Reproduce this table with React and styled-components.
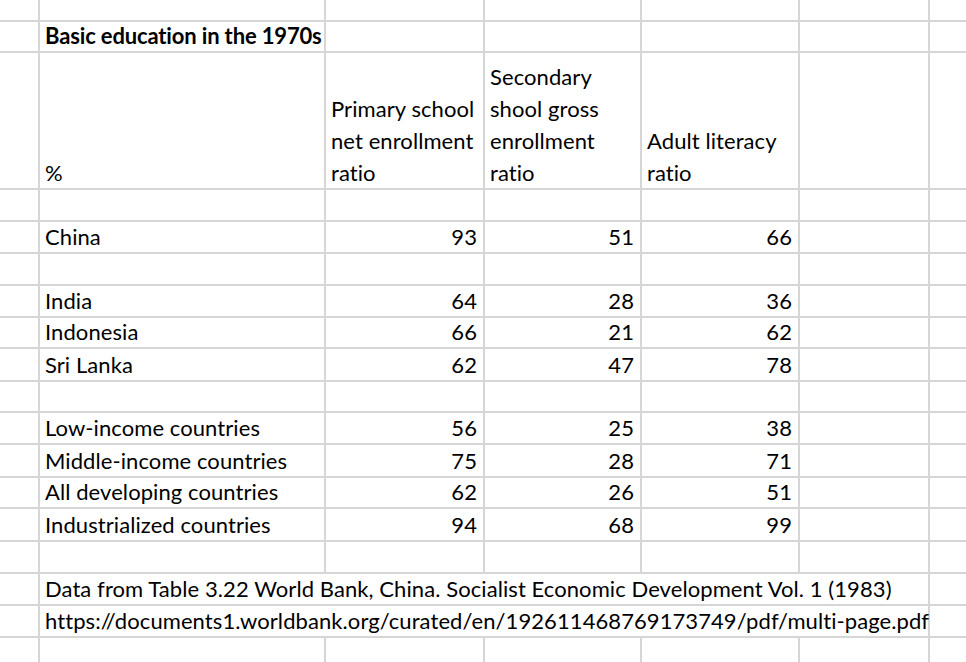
import React from "react";
import styled, { createGlobalStyle } from "styled-components";

const GlobalStyle = createGlobalStyle`
  html, body {
    margin: 0;
    padding: 0;
    background: #ffffff;
    overflow: hidden;
  }
  body {
    font-family: Lato, "Open Sans", "Liberation Sans", sans-serif;
    color: #000000;
    font-variant-ligatures: none;
  }
`;

const ROW_HEIGHTS = [20, 29, 135, 30, 30, 30, 30, 29, 31, 29, 30, 31, 29, 31, 30, 30, 30, 60];

const Sheet = styled.div`
  display: grid;
  grid-template-columns: 38px 284px 157px 155px 156px 128px 1fr;
  grid-template-rows: ${ROW_HEIGHTS.map((h) => `${h}px`).join(" ")};
  gap: 2px;
  background: #d6d6d6;
  width: 966px;
  height: 662px;
  overflow: hidden;
`;

const Cell = styled.div`
  background: #ffffff;
  display: flex;
  align-items: flex-end;
  justify-content: ${(p) => (p.$align === "right" ? "flex-end" : "flex-start")};
  grid-column: ${(p) => (p.$span ? `span ${p.$span}` : "auto")};
  padding: 0 6px 0 5px;
  font-size: 22px;
  line-height: 30px;
  letter-spacing: ${(p) => (p.$bold ? "-0.15px" : "0.08px")};
  font-weight: ${(p) => (p.$bold ? 700 : 400)};
  font-variant-ligatures: none;
  white-space: nowrap;
  overflow: visible;
  min-width: 0;
`;

const HeaderLines = styled.div`
  margin-bottom: -1px;
`;

const HeaderText = styled.span`
  display: block;
  line-height: 32px;
`;

const header = [
  "%",
  ["Primary school", "net enrollment", "ratio"],
  ["Secondary", "shool gross", "enrollment", "ratio"],
  ["Adult literacy", "ratio"],
];

const rows = [
  { kind: "blank" },
  { kind: "title", text: "Basic education in the 1970s" },
  { kind: "header" },
  { kind: "blank" },
  { kind: "data", label: "China", values: [93, 51, 66] },
  { kind: "blank" },
  { kind: "data", label: "India", values: [64, 28, 36] },
  { kind: "data", label: "Indonesia", values: [66, 21, 62] },
  { kind: "data", label: "Sri Lanka", values: [62, 47, 78] },
  { kind: "blank" },
  { kind: "data", label: "Low-income countries", values: [56, 25, 38] },
  { kind: "data", label: "Middle-income countries", values: [75, 28, 71] },
  { kind: "data", label: "All developing countries", values: [62, 26, 51] },
  { kind: "data", label: "Industrialized countries", values: [94, 68, 99] },
  { kind: "blank" },
  {
    kind: "note",
    text: "Data from Table 3.22 World Bank, China. Socialist Economic Development Vol. 1 (1983)",
  },
  {
    kind: "note",
    text: "https://documents1.worldbank.org/curated/en/192611468769173749/pdf/multi-page.pdf",
  },
  { kind: "blank" },
];

function renderRow(row, r) {
  const k = (c) => `${r}-${c}`;
  switch (row.kind) {
    case "title":
      return [
        <Cell key={k(0)} />,
        <Cell key={k(1)} $bold>
          {row.text}
        </Cell>,
        ...[2, 3, 4, 5, 6].map((c) => <Cell key={k(c)} />),
      ];
    case "header":
      return [
        <Cell key={k(0)} />,
        ...header.map((h, i) => (
          <Cell key={k(i + 1)}>
            {Array.isArray(h) ? (
              <HeaderLines>
                {h.map((line) => (
                  <HeaderText key={line}>{line}</HeaderText>
                ))}
              </HeaderLines>
            ) : (
              h
            )}
          </Cell>
        )),
        <Cell key={k(5)} />,
        <Cell key={k(6)} />,
      ];
    case "data":
      return [
        <Cell key={k(0)} />,
        <Cell key={k(1)}>{row.label}</Cell>,
        ...row.values.map((v, i) => (
          <Cell key={k(i + 2)} $align="right">
            {v}
          </Cell>
        )),
        <Cell key={k(5)} />,
        <Cell key={k(6)} />,
      ];
    case "note":
      return [
        <Cell key={k(0)} />,
        <Cell key={k(1)} $span={5}>
          {row.text}
        </Cell>,
        <Cell key={k(6)} />,
      ];
    default:
      return [0, 1, 2, 3, 4, 5, 6].map((c) => <Cell key={k(c)} />);
  }
}

export default function App() {
  return (
    <>
      <GlobalStyle />
      <Sheet>{rows.flatMap((row, r) => renderRow(row, r))}</Sheet>
    </>
  );
}
